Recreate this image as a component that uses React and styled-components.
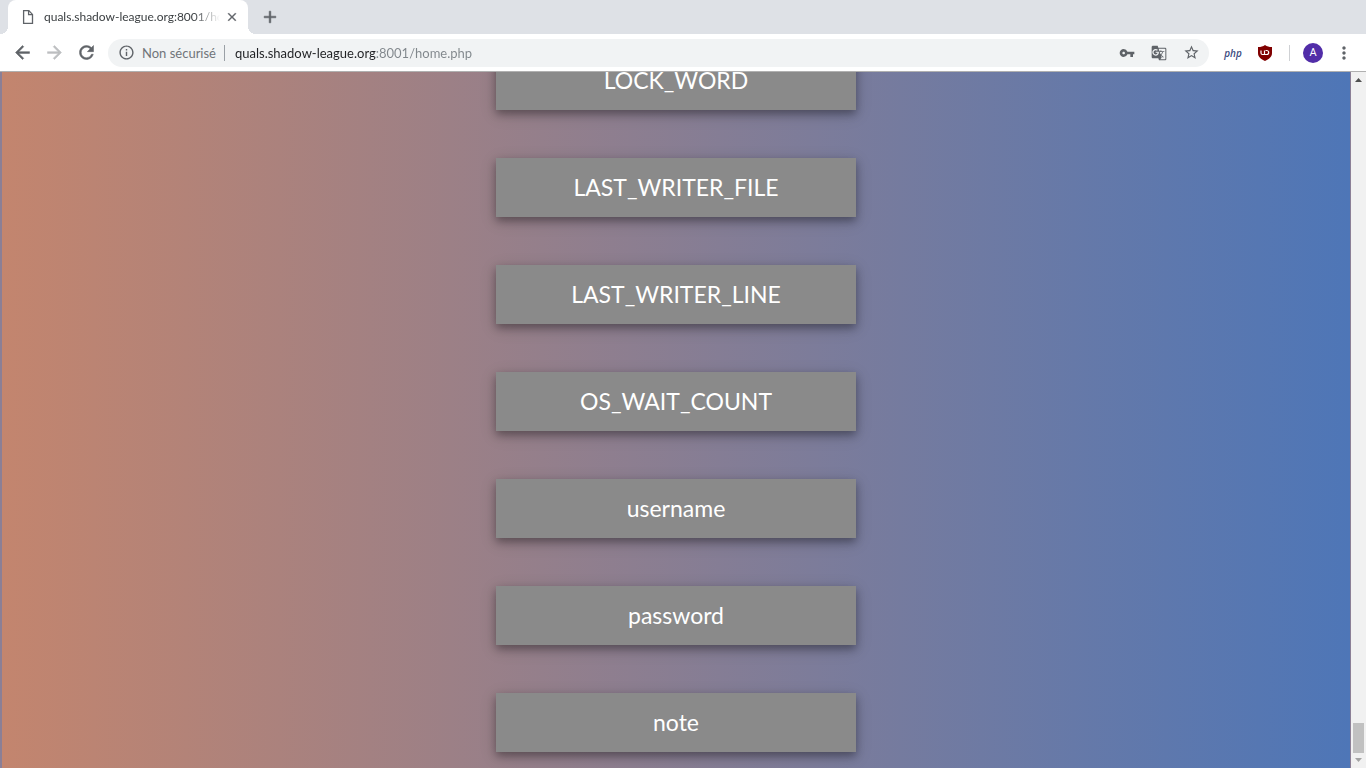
import React from "react";
import styled, { createGlobalStyle } from "styled-components";
import {
  MdAdd,
  MdArrowBack,
  MdArrowForward,
  MdClose,
  MdGTranslate,
  MdInfoOutline,
  MdMoreVert,
  MdRefresh,
  MdStarBorder,
  MdVpnKey,
} from "react-icons/md";

const GlobalStyle = createGlobalStyle`
  *, *::before, *::after { box-sizing: border-box; }
  body {
    margin: 0;
    font-family: Lato, "Liberation Sans", sans-serif;
    color: #3c4043;
  }
  button, input { font: inherit; }
`;

const Window = styled.div`
  display: flex;
  flex-direction: column;
  height: 100vh;
  overflow: hidden;
`;

const TabStrip = styled.header`
  display: flex;
  align-items: stretch;
  height: 34px;
  flex: none;
  padding-left: 8px;
  background: #dee1e6;
`;

const Tab = styled.div`
  position: relative;
  display: flex;
  align-items: center;
  width: 240px;
  padding: 0 8px 0 12px;
  border-radius: 8px 8px 0 0;
  background: #fff;

  &::before,
  &::after {
    content: "";
    position: absolute;
    bottom: 0;
    width: 8px;
    height: 8px;
  }
  &::before {
    left: -8px;
    background: radial-gradient(circle at 0 0, #dee1e6 8px, #fff 8px);
  }
  &::after {
    right: -8px;
    background: radial-gradient(circle at 100% 0, #dee1e6 8px, #fff 8px);
  }
`;

const TabTitle = styled.span`
  flex: 1;
  min-width: 0;
  margin: 0 4px 0 8px;
  overflow: hidden;
  white-space: nowrap;
  font-size: 12px;
  line-height: 16px;
  mask-image: linear-gradient(90deg, #000 85%, transparent);
`;

const IconButton = styled.button`
  display: flex;
  align-items: center;
  justify-content: center;
  flex: none;
  width: ${(p) => p.$width || 32}px;
  height: ${(p) => p.$height || 28}px;
  padding: 0;
  border: 0;
  background: none;
  color: ${(p) => p.$color || "#5f6368"};
  font-size: ${(p) => p.$size || 16}px;

  path:not([fill="none"]) {
    stroke-width: ${(p) => (p.$bold ? "0.6px" : null)};
    stroke: ${(p) => (p.$bold ? "currentColor" : null)};
  }
`;

const NewTab = styled(IconButton)`
  align-self: center;
  margin-left: 6px;
`;

const Toolbar = styled.nav`
  display: flex;
  align-items: center;
  flex: none;
  height: 38px;
  padding: 0 6px;
  border-bottom: 1px solid #b0b0b0;
  background: #fff;
`;

const AddressBar = styled.div`
  display: flex;
  align-items: center;
  flex: 1;
  min-width: 0;
  height: 28px;
  margin: 0 8px 0 6px;
  padding: 0 2px;
  border-radius: 14px;
  background: #f1f3f4;
  font-size: 13px;
`;

const Security = styled.label`
  flex: none;
  padding-right: 8px;
  border-right: 1px solid #9aa0a6;
  line-height: 16px;
  color: #70757a;
`;

const UrlInput = styled.input`
  flex: 1;
  min-width: 0;
  height: 20px;
  padding: 0;
  margin-left: 10px;
  border: 0;
  outline: 0;
  background: linear-gradient(90deg, #202124 141px, #80868b 141px);
  background-clip: text;
  -webkit-background-clip: text;
  color: transparent;
`;

const PhpMark = styled.span`
  font: italic 600 10px/16px "Open Sans", sans-serif;
  color: #3b4a80;
`;

const Divider = styled.span`
  width: 1px;
  height: 16px;
  margin: 0 8px;
  background: #cfd1d4;
`;

const Avatar = styled.span`
  width: 20px;
  height: 20px;
  border-radius: 50%;
  background: #512da8;
  color: #fff;
  font: 11px/20px Roboto, sans-serif;
  text-align: center;
`;

const Viewport = styled.div`
  display: flex;
  flex: 1;
  min-height: 0;
`;

const Page = styled.main`
  display: flex;
  flex-direction: column;
  align-items: center;
  justify-content: flex-end;
  gap: 48px;
  flex: 1;
  min-width: 0;
  padding-bottom: 16px;
  overflow: hidden;
  border: solid #8b7f96;
  border-width: 0 1px 0 2px;
  background: linear-gradient(90deg, #c3856e, #4e76b7);
`;

const FieldButton = styled.button`
  flex: none;
  width: 360px;
  max-width: 100%;
  height: 59px;
  padding: 0 0 2px;
  border: 0;
  background: #8a8a8a;
  color: #fff;
  font-size: 23px;
  line-height: 28px;
  box-shadow: 0 4px 8px rgba(0, 0, 0, 0.3), 0 4px 16px rgba(0, 0, 0, 0.16);
`;

const Scrollbar = styled.aside`
  display: flex;
  flex-direction: column;
  align-items: center;
  justify-content: space-between;
  width: 15px;
  flex: none;
  padding: 6px 0;
  background: #f1f1f1;
`;

const ScrollEnd = styled.div`
  display: flex;
  flex-direction: column;
  align-items: center;
  gap: 5px;
`;

const Thumb = styled.div`
  width: 11px;
  height: 30px;
  background: #c1c1c1;
`;

const fields = [
  "LOCK_WORD",
  "LAST_WRITER_FILE",
  "LAST_WRITER_LINE",
  "OS_WAIT_COUNT",
  "username",
  "password",
  "note",
];

const PageIcon = () => (
  <svg width="16" height="16" viewBox="0 0 16 16" fill="none" stroke="#5f6368" strokeWidth="1.3">
    <path d="M3.6 1.6h5.2l3.7 3.8v8.9H3.6z" />
    <path d="M8.6 1.6v4h3.9" />
  </svg>
);

const ShieldIcon = () => (
  <svg width="16" height="16" viewBox="0 0 16 16" fill="none">
    <path d="M8 0C6 1.5 4 2 1 2v6c0 4 3 6 7 8 4-2 7-4 7-8V2C12 2 10 1.5 8 0z" fill="#800000" />
    <path d="M4 5.5V8q0 1.5 1.5 1.5H7.5V5.5M7.5 9.500h2.200a2 2 0 0 0 0-4H8.5" stroke="#fff" strokeWidth="1.2" />
  </svg>
);

export default function App() {
  return (
    <Window>
      <GlobalStyle />
      <TabStrip>
        <Tab>
          <PageIcon />
          <TabTitle>quals.shadow-league.org:8001/home.php</TabTitle>
          <IconButton $bold $width={16} $height={16} $size={14} aria-label="Fermer">
            <MdClose />
          </IconButton>
        </Tab>
        <NewTab $bold $size={20} aria-label="Nouvel onglet">
          <MdAdd />
        </NewTab>
      </TabStrip>
      <Toolbar>
        <IconButton $bold $size={21} aria-label="Retour"><MdArrowBack /></IconButton>
        <IconButton $bold $size={21} $color="#bdbfc1" aria-label="Avancer"><MdArrowForward /></IconButton>
        <IconButton $bold $size={21} aria-label="Actualiser"><MdRefresh /></IconButton>
        <AddressBar>
          <IconButton $size={17} aria-label="Informations"><MdInfoOutline /></IconButton>
          <Security htmlFor="url">Non sécurisé</Security>
          <UrlInput id="url" type="text" defaultValue="quals.shadow-league.org:8001/home.php" />
          <IconButton aria-label="Mots de passe"><MdVpnKey /></IconButton>
          <IconButton aria-label="Traduire"><MdGTranslate /></IconButton>
          <IconButton $size={17} aria-label="Favori"><MdStarBorder /></IconButton>
        </AddressBar>
        <IconButton aria-label="PHP"><PhpMark>php</PhpMark></IconButton>
        <IconButton aria-label="Bloqueur"><ShieldIcon /></IconButton>
        <Divider />
        <IconButton $width={30} aria-label="Profil"><Avatar>A</Avatar></IconButton>
        <IconButton $size={20} aria-label="Menu"><MdMoreVert /></IconButton>
      </Toolbar>
      <Viewport>
        <Page>
          {fields.map((name) => (
            <FieldButton key={name}>{name}</FieldButton>
          ))}
        </Page>
        <Scrollbar>
          <svg width="7" height="4" viewBox="0 0 7 4"><path d="M0 4h7L3.500 0z" fill="#505050" /></svg>
          <ScrollEnd>
            <Thumb />
            <svg width="7" height="4" viewBox="0 0 7 4"><path d="M0 0h7L3.500 4z" fill="#a3a3a3" /></svg>
          </ScrollEnd>
        </Scrollbar>
      </Viewport>
    </Window>
  );
}
